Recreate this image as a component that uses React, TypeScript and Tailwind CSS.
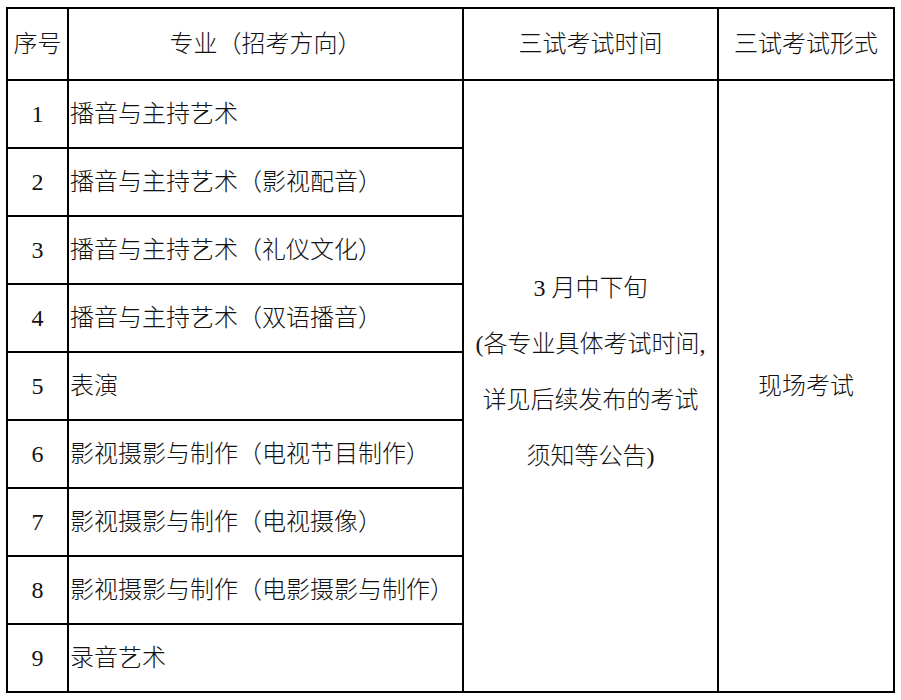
import React from "react";

const rows = [
  "播音与主持艺术",
  "播音与主持艺术（影视配音）",
  "播音与主持艺术（礼仪文化）",
  "播音与主持艺术（双语播音）",
  "表演",
  "影视摄影与制作（电视节目制作）",
  "影视摄影与制作（电视摄像）",
  "影视摄影与制作（电影摄影与制作）",
  "录音艺术",
];

export default function App() {
  return (
    <div
      className="w-[901px] h-[700px] bg-white text-[#111] overflow-hidden"
      style={{ fontFamily: '"Liberation Serif", "Noto Sans CJK SC", serif' }}
    >
      <div className="ml-[6px] mt-[7px] w-[889px] border-l-2 border-t-2 border-black grid grid-cols-[61px_395px_255px_176px] grid-rows-[72px_repeat(9,68px)] text-[24px] font-light">
        <div className="border-r-2 border-b-2 border-black flex items-center justify-center">序号</div>
        <div className="border-r-2 border-b-2 border-black flex items-center justify-center">专业（招考方向）</div>
        <div className="border-r-2 border-b-2 border-black flex items-center justify-center">三试考试时间</div>
        <div className="border-r-2 border-b-2 border-black flex items-center justify-center">三试考试形式</div>

        {rows.map((r, i) => (
          <React.Fragment key={i}>
            <div
              className="border-r-2 border-b-2 border-black flex items-center justify-center col-start-1"
              style={{ gridRowStart: i + 2 }}
            >
              {i + 1}
            </div>
            <div
              className="border-r-2 border-b-2 border-black flex items-center pl-[1px] whitespace-nowrap col-start-2"
              style={{ gridRowStart: i + 2 }}
            >
              {r}
            </div>
          </React.Fragment>
        ))}

        <div className="col-start-3 row-start-2 row-span-9 border-r-2 border-b-2 border-black flex flex-col items-center justify-center leading-[56px] pb-[28px] whitespace-nowrap">
          <div>3 月中下旬</div>
          <div>(各专业具体考试时间,</div>
          <div>详见后续发布的考试</div>
          <div>须知等公告)</div>
        </div>
        <div className="col-start-4 row-start-2 row-span-9 border-r-2 border-b-2 border-black flex items-center justify-center">
          现场考试
        </div>
      </div>
    </div>
  );
}
